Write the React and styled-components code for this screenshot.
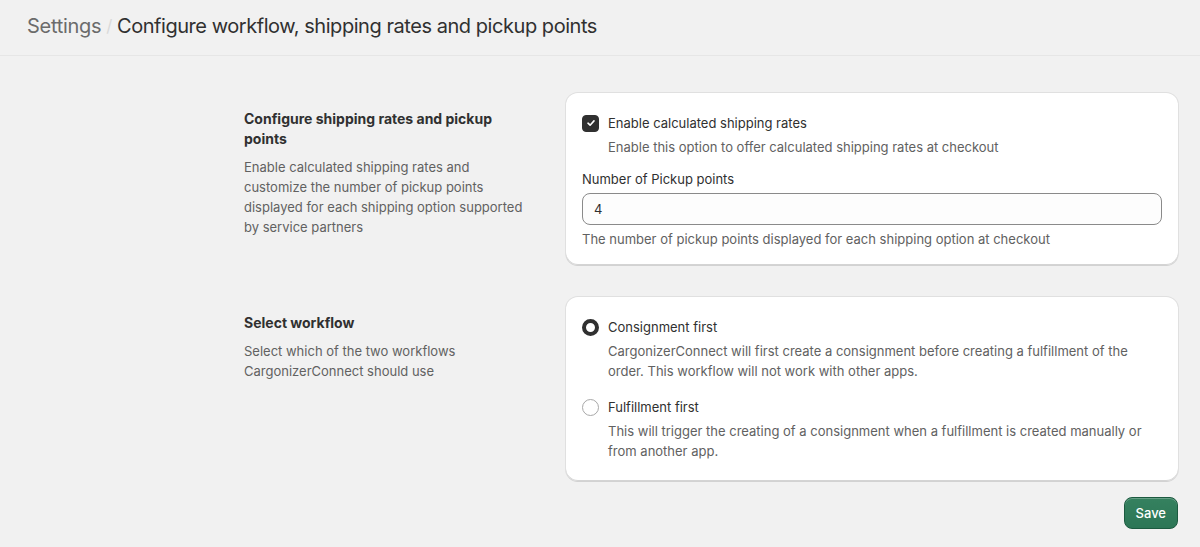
import React, { useState } from "react";
import styled, { createGlobalStyle } from "styled-components";

const GlobalStyle = createGlobalStyle`
  body {
    margin: 0;
    background: #f1f1f1;
    font-family: Inter, "Noto Sans", sans-serif;
    color: #303030;
    -webkit-font-smoothing: antialiased;
  }
`;

const Header = styled.header`
  height: 56px;
  box-sizing: border-box;
  border-bottom: 1px solid #e6e6e6;
  display: flex;
  align-items: center;
  padding: 0 27px 4px;
  font-size: 20px;
  letter-spacing: -0.3px;
`;

const Crumb = styled.span`
  color: #6b6b6b;
`;

const Slash = styled.span`
  color: #dadada;
  margin: 0 5px 0 5px;
  font-size: 17px;
`;

const Title = styled.span`
  color: #303030;
  font-weight: 400;
  letter-spacing: -0.45px;
`;

const Main = styled.main`
  padding: 37px 22px 18px 244px;
  display: flex;
  flex-direction: column;
  gap: 32px;
`;

const Section = styled.section`
  display: grid;
  grid-template-columns: 284px 1fr;
  gap: 38px;
`;

const Annotation = styled.div`
  padding-top: 16px;
  display: flex;
  flex-direction: column;
  gap: 8px;
`;

const AnnotationTitle = styled.h2`
  margin: 0;
  font-size: 14px;
  line-height: 20px;
  font-weight: 650;
  color: #303030;
`;

const AnnotationText = styled.p`
  margin: 0;
  font-size: 13px;
  line-height: 20px;
  color: #616161;
`;

const Card = styled.div`
  background: #fff;
  border-radius: 12px;
  padding: ${(p) => p.$pad};
  box-shadow: 0 1px 0 0 rgba(26, 26, 26, 0.07), 0 0 0 1px rgba(0, 0, 0, 0.07),
    inset 0 -1px 0 0 #d4d4d4;
`;

const ChoiceRow = styled.label`
  display: flex;
  align-items: center;
  gap: 9px;
  font-size: 13px;
  line-height: 20px;
  color: #303030;
  cursor: pointer;
`;

const Help = styled.div`
  font-size: 13px;
  line-height: 20px;
  color: #616161;
  margin-top: 4px;
  padding-left: ${(p) => (p.$indent ? "26px" : "0")};
`;

const Box = styled.span`
  width: 17px;
  height: 17px;
  box-sizing: border-box;
  border-radius: 4px;
  background: ${(p) => (p.$on ? "#303030" : "#fff")};
  border: 1px solid ${(p) => (p.$on ? "#303030" : "#8a8a8a")};
  display: inline-flex;
  align-items: center;
  justify-content: center;
  flex-shrink: 0;
`;

const Radio = styled.span`
  width: 17px;
  height: 17px;
  box-sizing: border-box;
  border-radius: 50%;
  background: #fff;
  border: ${(p) => (p.$on ? "4.5px solid #303030" : "1px solid #a8a8a8")};
  flex-shrink: 0;
`;

const Field = styled.div`
  margin-top: 12px;
`;

const FieldLabel = styled.div`
  font-size: 13px;
  line-height: 20px;
  color: #303030;
  margin-bottom: 4px;
`;

const Input = styled.input`
  width: 100%;
  box-sizing: border-box;
  height: 32px;
  border: 1px solid #8a8a8a;
  border-radius: 8px;
  background: #fdfdfd;
  padding: 0 11px;
  font-family: inherit;
  font-size: 13px;
  color: #303030;
  outline: none;
`;

const Option = styled.div`
  & + & {
    margin-top: 16px;
  }
`;

const Footer = styled.div`
  display: flex;
  justify-content: flex-end;
  margin-top: -16px;
`;

const SaveButton = styled.button`
  height: 32px;
  padding: 0 11px;
  border-radius: 8px;
  border: 1px solid #1c5a40;
  background: linear-gradient(#35815f, #2c7656);
  box-shadow: inset 0 1px 0 0 rgba(255, 255, 255, 0.25);
  color: #fff;
  font-family: inherit;
  font-size: 13px;
  font-weight: 500;
  cursor: pointer;
`;

const Check = () => (
  <svg width="10" height="10" viewBox="0 0 10 10" fill="none">
    <path
      d="M2 5.2L4.1 7.2L8 2.9"
      stroke="#fff"
      strokeWidth="1.6"
      strokeLinecap="round"
      strokeLinejoin="round"
    />
  </svg>
);

const workflows = [
  {
    id: "consignment",
    label: "Consignment first",
    help: "CargonizerConnect will first create a consignment before creating a fulfillment of the order. This workflow will not work with other apps.",
  },
  {
    id: "fulfillment",
    label: "Fulfillment first",
    help: "This will trigger the creating of a consignment when a fulfillment is created manually or from another app.",
  },
];

export default function App() {
  const [rates, setRates] = useState(true);
  const [points, setPoints] = useState("4");
  const [workflow, setWorkflow] = useState("consignment");

  return (
    <>
      <GlobalStyle />
      <Header>
        <Crumb>Settings</Crumb>
        <Slash>/</Slash>
        <Title>Configure workflow, shipping rates and pickup points</Title>
      </Header>
      <Main>
        <Section>
          <Annotation>
            <AnnotationTitle>Configure shipping rates and pickup points</AnnotationTitle>
            <AnnotationText>
              Enable calculated shipping rates and customize the number of pickup
              points displayed for each shipping option supported by service
              partners
            </AnnotationText>
          </Annotation>
          <Card $pad="20px 16px 16px">
            <ChoiceRow onClick={() => setRates(!rates)}>
              <Box $on={rates}>{rates && <Check />}</Box>
              Enable calculated shipping rates
            </ChoiceRow>
            <Help $indent>Enable this option to offer calculated shipping rates at checkout</Help>
            <Field>
              <FieldLabel>Number of Pickup points</FieldLabel>
              <Input value={points} onChange={(e) => setPoints(e.target.value)} />
              <Help>The number of pickup points displayed for each shipping option at checkout</Help>
            </Field>
          </Card>
        </Section>
        <Section>
          <Annotation>
            <AnnotationTitle>Select workflow</AnnotationTitle>
            <AnnotationText>
              Select which of the two workflows CargonizerConnect should use
            </AnnotationText>
          </Annotation>
          <Card $pad="20px 16px 20px">
            {workflows.map((w) => (
              <Option key={w.id}>
                <ChoiceRow onClick={() => setWorkflow(w.id)}>
                  <Radio $on={workflow === w.id} />
                  {w.label}
                </ChoiceRow>
                <Help $indent>{w.help}</Help>
              </Option>
            ))}
          </Card>
        </Section>
        <Footer>
          <SaveButton>Save</SaveButton>
        </Footer>
      </Main>
    </>
  );
}
